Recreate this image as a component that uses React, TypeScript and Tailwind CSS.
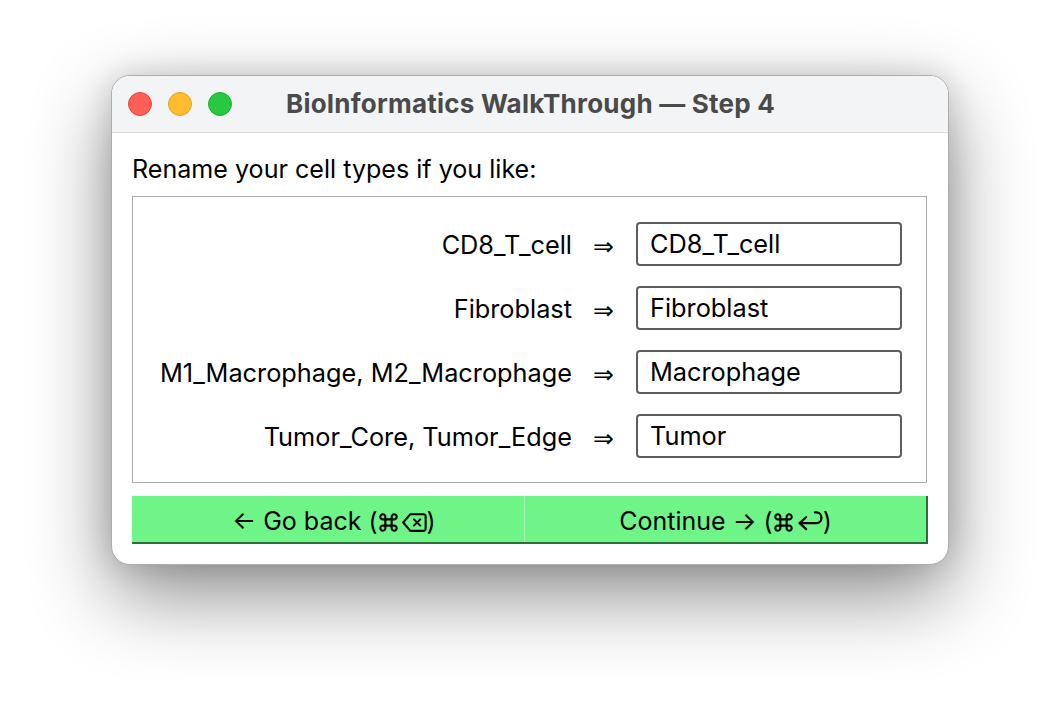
import React from 'react';

const rows = [
  { from: 'CD8_T_cell', to: 'CD8_T_cell' },
  { from: 'Fibroblast', to: 'Fibroblast' },
  { from: 'M1_Macrophage, M2_Macrophage', to: 'Macrophage' },
  { from: 'Tumor_Core, Tumor_Edge', to: 'Tumor' },
];

const DeleteIcon = () => (
  <svg className="inline-block w-[25px] h-[21px] align-[-3px]" viewBox="0 0 24 20" fill="none" stroke="black" strokeWidth={2} strokeLinejoin="round" strokeLinecap="round">
    <path d="M8 2h12.5a2.2 2.2 0 0 1 2.2 2.2v11.6a2.2 2.2 0 0 1-2.2 2.2h-12.5l-6.8-8z" />
    <path d="M11.5 7l6 6M17.5 7l-6 6" />
  </svg>
);

const ReturnIcon = () => (
  <svg className="inline-block w-[25px] h-[22px] ml-[1px] align-[-2px]" viewBox="0 0 23 20" fill="none" stroke="black" strokeWidth={2} strokeLinejoin="round" strokeLinecap="round">
    <path d="M1.5 12h15.5a4.5 4.5 0 0 0 4.5-4.5v-1a4.5 4.5 0 0 0-4.5-4.5h-1.5" />
    <path d="M7.5 6.5l-6 5.5 6 5.5" />
  </svg>
);

const CmdIcon = () => (
  <svg className="inline-block w-[21px] h-[21px] mr-[3px] align-[-3px]" viewBox="0 0 20 20" fill="none" stroke="black" strokeWidth={2}>
    <path d="M7 7h6v6h-6zM7 7h-2.2a2.4 2.4 0 1 1 2.2-2.2zM13 7v-2.2a2.4 2.4 0 1 1 2.2 2.2zM13 13h2.2a2.4 2.4 0 1 1-2.2 2.2zM7 13v2.2a2.4 2.4 0 1 1-2.2-2.2z" />
  </svg>
);

export default function App() {
  return (
    <div className="w-[1060px] h-[712px] bg-white overflow-hidden pt-[75px] pl-[111px] font-['Inter',sans-serif] text-black">
      <div className="w-[838px] h-[490px] bg-white rounded-[19px] border border-[#adadad] overflow-hidden shadow-[0_30px_80px_rgba(0,0,0,0.45),0_0_30px_rgba(0,0,0,0.14)] flex flex-col">
        {/* Title bar */}
        <div className="h-[57px] shrink-0 bg-[#f2f4f6] border-b border-[#d9d9d9] grid grid-cols-[1fr_auto_1fr] items-center pl-[16px] pr-[15px]">
          <div className="flex gap-[16px]">
            <div className="w-[24px] h-[24px] rounded-full bg-[#ff5f57] border border-[#e2463f]" />
            <div className="w-[24px] h-[24px] rounded-full bg-[#febc2e] border border-[#e1a325]" />
            <div className="w-[24px] h-[24px] rounded-full bg-[#28c840] border border-[#1fae33]" />
          </div>
          <div className="text-[26px] font-bold text-[#4a4a4a] tracking-[0.22px] pb-[1px]">BioInformatics WalkThrough — Step 4</div>
          <div />
        </div>

        {/* Body */}
        <div className="flex-1 pl-[20px] pt-[21px]">
          <div className="text-[25.1px] leading-[30px] mb-[12px]">Rename your cell types if you like:</div>

          <div className="w-[795px] h-[287px] border border-[#ababab] pt-[25px] pr-[24px]">
            <div className="flex flex-col gap-[20px]">
              {rows.map((row) => (
                <div key={row.from} className="flex items-center justify-end h-[44px]">
                  <span className="text-[25.3px] pr-[21px] pt-[2px]">{row.from}</span>
                  <span className="text-[25px] w-[43px] pt-[6px] font-['DejaVu_Sans',sans-serif]">⇒</span>
                  <input
                    defaultValue={row.to}
                    className="w-[266px] h-[44px] border-2 border-[#5e5e5e] rounded-[4px] px-[12px] pb-[2px] text-[25.3px] outline-none bg-white"
                  />
                </div>
              ))}
            </div>
          </div>

          {/* Buttons */}
          <div className="mt-[13px] w-[796px] h-[48px] flex bg-[#6ff587] border-b-2 border-r-2 border-[#2f6b3a]">
            <button className="w-[393px] text-center pt-[5px] pl-[12px] text-[25px] border-r border-[#a4f5b2]">
              ← Go back (<CmdIcon /><DeleteIcon />)
            </button>
            <button className="flex-1 text-center pt-[5px] text-[25px]">
              Continue → (<CmdIcon /><ReturnIcon />)
            </button>
          </div>
        </div>
      </div>
    </div>
  );
}
